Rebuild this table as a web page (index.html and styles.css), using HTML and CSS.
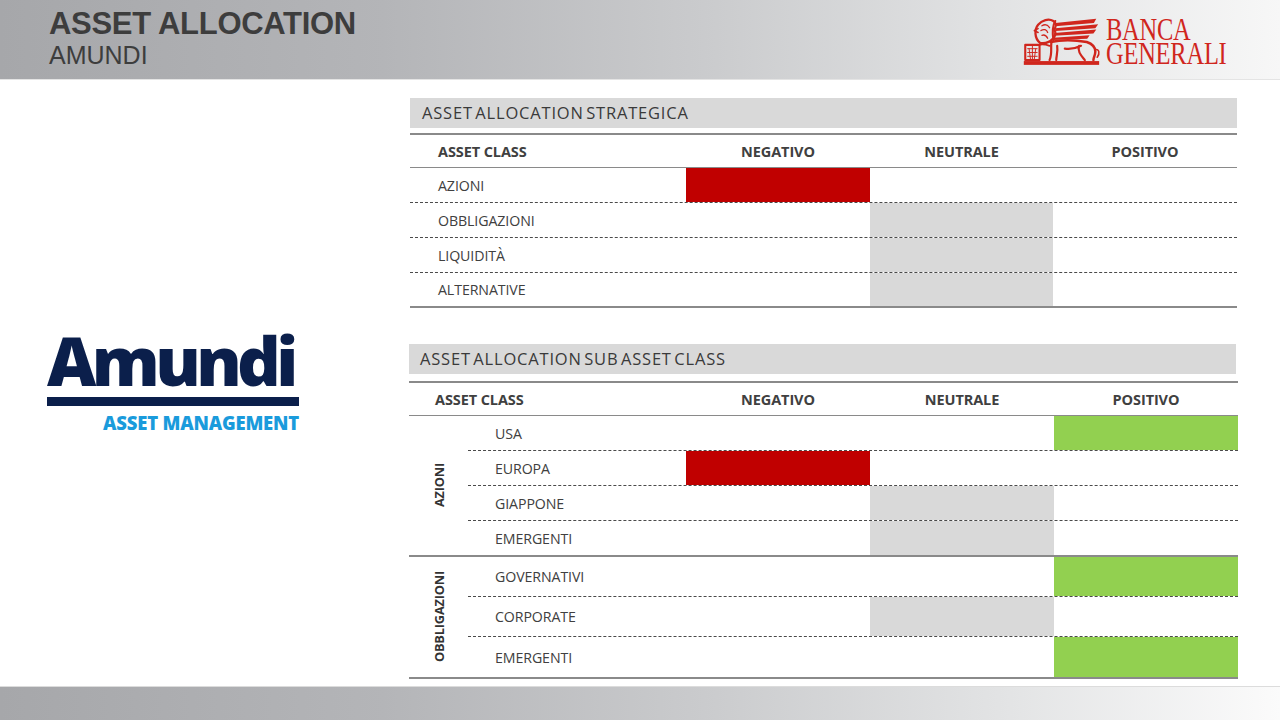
FILE: index.html
```html
<!DOCTYPE html>
<html lang="it">
<head>
<meta charset="utf-8">
<title>Asset Allocation - Amundi</title>
<link rel="stylesheet" href="styles.css">
</head>
<body>
<div class="page">
  <header class="top">
    <div class="titles">
      <div class="title">ASSET ALLOCATION</div>
      <div class="subtitle">AMUNDI</div>
    </div>
    <div class="bg-logo">
      <svg class="lion" width="82" height="52" viewBox="0 0 86 54">
        <g fill="#d0261d">
          <path d="M37 7 L80 2.5 L77.5 7 L37 10.5 Z"/>
          <path d="M37 12.5 L82 8.5 L79 12.5 L37 15.5 Z"/>
          <path d="M36 17.5 L80 14 L77 18 L36 20.5 Z"/>
          <path d="M35 22.5 L73 20 L70.5 23.5 L35 25 Z"/>
          <rect x="4" y="47" width="79" height="4"/>
        </g>
        <g fill="none" stroke="#d0261d" stroke-linecap="round" stroke-linejoin="round">
          <rect x="5.5" y="30" width="15" height="16" stroke-width="2.2"/>
          <path d="M13 31 V45 M8 34 H18 M8 38 H18 M8 42 H18 M9.5 34 L11 45 M16.5 34 L15 45" stroke-width="1"/>
          <path d="M21 28 C15 23 15 14 19 9 C23 4 30 2 35 5 C38 7 38 11 36 14 C38 17 37 22 34 24 C31 27 26 29 21 28" stroke-width="2.4"/>
          <path d="M23 10 C26 8 29 9 31 12 M22 15 C25 13 28 14 29 17 M23 20 C26 19 28 21 29 23" stroke-width="1.4"/>
          <path d="M19 13 L15 15 L19 17" stroke-width="1.6"/>
          <path d="M37 5 C34 10 34 18 35 25" stroke-width="2.2"/>
          <path d="M32 27 C42 25 58 25 70 27 C76 29 79 33 79 37 C79 41 77 43 77 46" stroke-width="2.6"/>
          <path d="M33 27 C32 33 34 39 31 46 M39 31 C40 37 38 42 38 46 M62 31 C60 37 64 41 68 46 M47 34 C54 35 60 33 64 31" stroke-width="2.3"/>
          <path d="M20 30 C24 29 28 30 31 31" stroke-width="1.8"/>
          <path d="M79 35 C83 34 84 39 81 43" stroke-width="1.7"/>
        </g>
      </svg>
      <div class="bg-name">
        <span>BANCA</span>
        <span>GENERALI</span>
      </div>
    </div>
  </header>

  <main class="content">
    <aside class="brand">
      <div class="amundi">
        <div class="amundi-word">Amundi</div>
        <div class="amundi-bar"></div>
        <div class="amundi-sub">ASSET MANAGEMENT</div>
      </div>
    </aside>

    <section class="tables">
      <div class="block strat">
        <div class="block-title">ASSET ALLOCATION STRATEGICA</div>
        <div class="grid1 head">
          <div class="c-label">ASSET CLASS</div>
          <div class="c-center">NEGATIVO</div>
          <div class="c-center">NEUTRALE</div>
          <div class="c-center">POSITIVO</div>
        </div>
        <div class="grid1 row">
          <div class="c-label">AZIONI</div>
          <div class="neg"></div><div></div><div></div>
        </div>
        <div class="grid1 row">
          <div class="c-label">OBBLIGAZIONI</div>
          <div></div><div class="neu"></div><div></div>
        </div>
        <div class="grid1 row">
          <div class="c-label">LIQUIDITÀ</div>
          <div></div><div class="neu"></div><div></div>
        </div>
        <div class="grid1 row last">
          <div class="c-label">ALTERNATIVE</div>
          <div></div><div class="neu"></div><div></div>
        </div>
      </div>

      <div class="block sub">
        <div class="block-title">ASSET ALLOCATION SUB ASSET CLASS</div>
        <div class="grid2 head">
          <div class="c-label">ASSET CLASS</div>
          <div class="c-center">NEGATIVO</div>
          <div class="c-center">NEUTRALE</div>
          <div class="c-center">POSITIVO</div>
        </div>

        <div class="group">
          <div class="group-label"><span>AZIONI</span></div>
          <div class="group-rows">
            <div class="grid3 row">
              <div class="c-label">USA</div>
              <div></div><div></div><div class="pos"></div>
            </div>
            <div class="grid3 row">
              <div class="c-label">EUROPA</div>
              <div class="neg"></div><div></div><div></div>
            </div>
            <div class="grid3 row">
              <div class="c-label">GIAPPONE</div>
              <div></div><div class="neu"></div><div></div>
            </div>
            <div class="grid3 row last short">
              <div class="c-label">EMERGENTI</div>
              <div></div><div class="neu"></div><div></div>
            </div>
          </div>
        </div>

        <div class="group">
          <div class="group-label"><span>OBBLIGAZIONI</span></div>
          <div class="group-rows">
            <div class="grid3 row tall">
              <div class="c-label">GOVERNATIVI</div>
              <div></div><div></div><div class="pos"></div>
            </div>
            <div class="grid3 row tall">
              <div class="c-label">CORPORATE</div>
              <div></div><div class="neu"></div><div></div>
            </div>
            <div class="grid3 row tall last">
              <div class="c-label">EMERGENTI</div>
              <div></div><div></div><div class="pos"></div>
            </div>
          </div>
        </div>
      </div>
    </section>
  </main>

  <footer class="bottom"></footer>
</div>
</body>
</html>
```

FILE: styles.css
```css
* { box-sizing: border-box; }
html, body { margin: 0; padding: 0; }
body {
  width: 1280px;
  height: 720px;
  overflow: hidden;
  background: #ffffff;
  font-family: "Open Sans", "Liberation Sans", sans-serif;
  color: #404040;
}
.page {
  width: 1280px;
  height: 720px;
  display: flex;
  flex-direction: column;
}

/* header */
.top {
  height: 80px;
  flex: 0 0 80px;
  background: linear-gradient(90deg, #a6a7aa 0%, #b4b5b8 30%, #cacbcd 55%, #e2e3e4 78%, #f7f7f7 100%);
  border-bottom: 1px solid #e4e4e4;
  display: flex;
  justify-content: space-between;
  align-items: flex-start;
  padding: 0 54px 0 49px;
}
.titles {
  font-family: "Liberation Sans", Arial, sans-serif;
  color: #3d3d3d;
  padding-top: 8px;
}
.title {
  font-size: 31px;
  font-weight: bold;
  line-height: 32px;
  letter-spacing: -0.3px;
}
.subtitle {
  font-size: 25px;
  line-height: 28px;
  margin-top: 1px;
}
.bg-logo {
  display: flex;
  align-items: flex-start;
  padding-top: 14px;
}
.lion { display: block; margin-right: 4px; margin-top: 2px; }
.bg-name {
  display: flex;
  flex-direction: column;
  font-family: "Liberation Serif", "Times New Roman", serif;
  color: #d0261d;
  font-size: 31px;
  line-height: 24px;
  padding-top: 4px;
  width: 120px;
}
.bg-name span {
  display: block;
  transform: scaleX(0.79);
  transform-origin: left center;
  white-space: nowrap;
  letter-spacing: -0.3px;
}

/* content */
.content {
  flex: 1 1 auto;
  display: flex;
}
.brand {
  width: 409px;
  flex: 0 0 409px;
  display: flex;
  align-items: center;
  padding-left: 49px;
}
.amundi {
  width: 250px;
  display: flex;
  flex-direction: column;
  margin-top: -4px;
}
.amundi-word {
  font-family: "Open Sans", sans-serif;
  font-weight: 800;
  font-size: 68px;
  line-height: 60px;
  letter-spacing: -4.6px;
  color: #0b1f4b;
  margin-left: -2px;
  white-space: nowrap;
}
.amundi-bar {
  height: 9px;
  background: #0b1f4b;
  margin-top: 7px;
  margin-left: -2px;
}
.amundi-sub {
  font-family: "Open Sans", sans-serif;
  font-weight: 800;
  font-size: 18.5px;
  line-height: 20px;
  color: #1a9bdc;
  text-align: right;
  margin-top: 7px;
  white-space: nowrap;
  letter-spacing: -0.2px;
}

.tables {
  flex: 1 1 auto;
  display: flex;
  flex-direction: column;
  padding-top: 18px;
}
.block-title {
  height: 30px;
  background: #d9d9d9;
  font-size: 16.5px;
  line-height: 30px;
  color: #3a3a3a;
  letter-spacing: 0.8px;
  word-spacing: -2.5px;
  white-space: nowrap;
}
.strat { width: 827px; margin-left: 1px; }
.strat .block-title { padding-left: 12px; margin-bottom: 5px; }
.sub { width: 829px; margin-top: 36px; }
.sub .block-title { width: 827px; padding-left: 11px; margin-bottom: 7px; }

.head {
  border-top: 2px solid #8a8a8a;
  border-bottom: 1.5px solid #8a8a8a;
  height: 35px;
  font-weight: bold;
  font-size: 14.5px;
  letter-spacing: -0.1px;
}
.grid1 {
  display: grid;
  grid-template-columns: 276px 184px 183px 184px;
}
.grid2 {
  display: grid;
  grid-template-columns: 277px 184px 184px 184px;
}
.grid3 {
  display: grid;
  grid-template-columns: 218px 184px 184px 184px;
}
.head > div {
  display: flex;
  align-items: center;
}
.head .c-label { padding-left: 28px; }
.grid2.head .c-label { padding-left: 26px; }
.c-center { justify-content: center; }

.row {
  height: 35px;
  border-bottom: 1px dashed #4a4a4a;
  font-size: 14.2px;
  letter-spacing: -0.1px;
}
.row > div { display: flex; align-items: center; }
.grid1.row .c-label { padding-left: 28px; }
.grid3.row .c-label { padding-left: 27px; }
.strat .row.last { border-bottom: 2px solid #8a8a8a; }
.group-rows .row.last { border-bottom: none; }
.row.short { height: 34px; }
.row.tall { height: 40px; }

.neg { background: #c00000; }
.neu { background: #d9d9d9; }
.pos { background: #92d050; }

.group {
  display: flex;
  border-bottom: 2px solid #8a8a8a;
}
.group-label {
  width: 59px;
  flex: 0 0 59px;
  display: flex;
  align-items: center;
  justify-content: center;
}
.group-label span {
  writing-mode: vertical-rl;
  transform: rotate(180deg);
  font-size: 12.8px;
  font-weight: bold;
  color: #333333;
  letter-spacing: -0.2px;
}
.group-rows {
  flex: 1 1 auto;
  display: flex;
  flex-direction: column;
}

/* footer */
.bottom {
  height: 34px;
  flex: 0 0 34px;
  border-top: 1px solid #dcdcdc;
  background: linear-gradient(90deg, #a6a7aa 0%, #b4b5b8 30%, #cacbcd 55%, #e2e3e4 78%, #fbfbfb 100%);
}
```
